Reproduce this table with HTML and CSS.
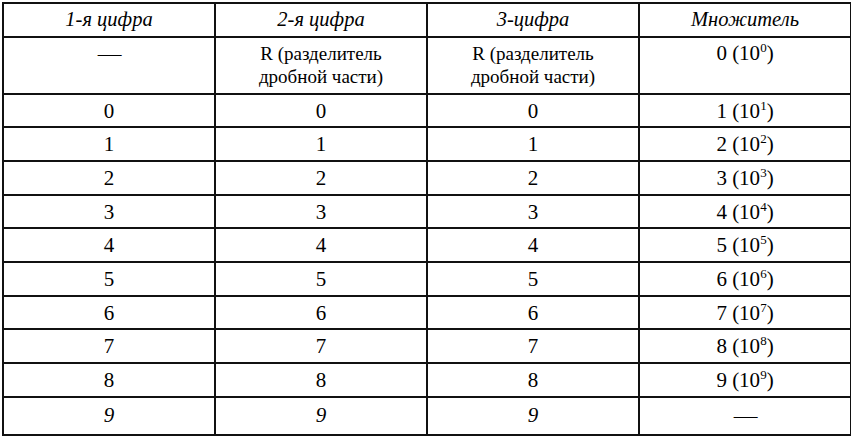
FILE: index.html
```html
<!DOCTYPE html>
<html lang="ru">
<head>
<meta charset="utf-8">
<title>Таблица</title>
<link rel="stylesheet" href="styles.css">
</head>
<body>
<table class="grid">
  <colgroup><col class="c"><col class="c"><col class="c"><col class="c"></colgroup>
  <tr class="head">
    <td><i>1-я цифра</i></td>
    <td><i>2-я цифра</i></td>
    <td><i>3-цифра</i></td>
    <td><i>Множитель</i></td>
  </tr>
  <tr class="tall">
    <td><span class="dash">—</span></td>
    <td><span class="note">R (разделитель<br>дробной части)</span></td>
    <td><span class="note">R (разделитель<br>дробной части)</span></td>
    <td>0 (10<span class="sup">0</span>)</td>
  </tr>
  <tr><td>0</td><td>0</td><td>0</td><td>1 (10<span class="sup">1</span>)</td></tr>
  <tr><td>1</td><td>1</td><td>1</td><td>2 (10<span class="sup">2</span>)</td></tr>
  <tr><td>2</td><td>2</td><td>2</td><td>3 (10<span class="sup">3</span>)</td></tr>
  <tr><td>3</td><td>3</td><td>3</td><td>4 (10<span class="sup">4</span>)</td></tr>
  <tr><td>4</td><td>4</td><td>4</td><td>5 (10<span class="sup">5</span>)</td></tr>
  <tr><td>5</td><td>5</td><td>5</td><td>6 (10<span class="sup">6</span>)</td></tr>
  <tr><td>6</td><td>6</td><td>6</td><td>7 (10<span class="sup">7</span>)</td></tr>
  <tr><td>7</td><td>7</td><td>7</td><td>8 (10<span class="sup">8</span>)</td></tr>
  <tr><td>8</td><td>8</td><td>8</td><td>9 (10<span class="sup">9</span>)</td></tr>
  <tr class="last"><td><i>9</i></td><td><i>9</i></td><td><i>9</i></td><td><span class="dash">—</span></td></tr>
</table>
</body>
</html>
```
FILE: styles.css
```css
html, body {
  margin: 0;
  padding: 0;
  background: #fff;
}
body {
  padding: 2px 0 0 2px;
  font-family: "Liberation Serif", "Times New Roman", serif;
  font-size: 21px;
  color: #000;
}
.grid {
  border-collapse: collapse;
  table-layout: fixed;
  width: 846px;
}
.grid .c {
  width: 212px;
}
.grid td {
  border: 2px solid #111;
  text-align: center;
  vertical-align: top;
  line-height: 23px;
  padding: 5px 4px 0 4px;
  height: 33.7px;
  box-sizing: border-box;
}
.grid tr.head td {
  height: 33.5px;
  padding-top: 4px;
  font-size: 20.5px;
}
.grid tr.tall td {
  height: 57px;
  padding-top: 4px;
}
.grid tr.last td {
  height: 38px;
  padding-top: 6px;
}
.note {
  font-size: 19px;
}
.sup {
  font-size: 13px;
  vertical-align: 8px;
  line-height: 0;
}
.dash {
  display: inline-block;
  font-size: 19px;
  transform: scaleX(1.25);
}
```
